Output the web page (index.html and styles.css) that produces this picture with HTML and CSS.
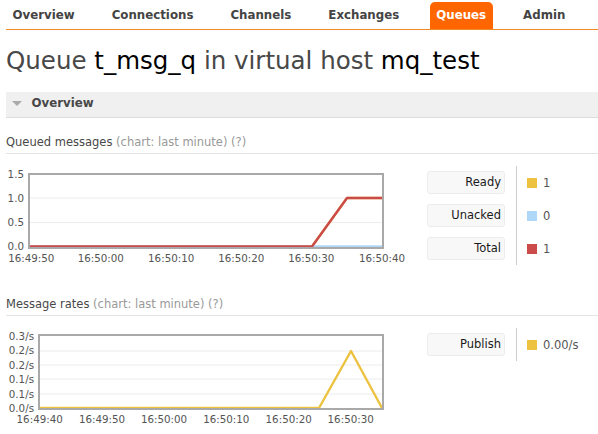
FILE: index.html
```html
<!DOCTYPE html>
<html>
<head>
<meta charset="utf-8">
<title>Queue t_msg_q</title>
<link rel="stylesheet" href="styles.css">
</head>
<body>
<div class="menu">
  <ul>
    <li><a>Overview</a></li>
    <li><a>Connections</a></li>
    <li><a>Channels</a></li>
    <li><a>Exchanges</a></li>
    <li class="active"><a>Queues</a></li>
    <li><a>Admin</a></li>
  </ul>
</div>
<div class="main">
  <h1>Queue <b>t_msg_q</b> in virtual host <b>mq_test</b></h1>
  <div class="section">
    <h2><span class="tri"></span>Overview</h2>
    <h3>Queued messages <span class="help">(chart: last minute) (?)</span></h3>
    <div class="chart-row">
      <svg class="chart" width="404" height="104" viewBox="0 0 404 104">
        <line class="grid" x1="24" y1="35" x2="376" y2="35"/>
        <line class="grid" x1="24" y1="59.5" x2="376" y2="59.5"/>
        <polyline class="s-ready" points="24,83.5 306,83.5 341,35 376,35"/>
        <polyline class="s-unacked" points="24,83.5 376,83.5"/>
        <polyline class="s-total" points="24,83.5 306,83.5 341,35 376,35"/>
        <rect class="frame" x="23" y="11" width="354" height="74"/>
        <g class="ylab">
          <text x="18" y="15">1.5</text>
          <text x="18" y="39">1.0</text>
          <text x="18" y="63">0.5</text>
          <text x="18" y="87">0.0</text>
        </g>
        <g class="xlab">
          <text x="25.3" y="99">16:49:50</text>
          <text x="94.8" y="99">16:50:00</text>
          <text x="165.2" y="99">16:50:10</text>
          <text x="235.3" y="99">16:50:20</text>
          <text x="305.3" y="99">16:50:30</text>
          <text x="376" y="99">16:50:40</text>
        </g>
      </svg>
      <div class="legend">
        <div class="keys">
          <div class="key">Ready</div>
          <div class="key">Unacked</div>
          <div class="key">Total</div>
        </div>
        <div class="vals">
          <div class="val"><span class="sw ready"></span>1</div>
          <div class="val"><span class="sw unacked"></span>0</div>
          <div class="val"><span class="sw total"></span>1</div>
        </div>
      </div>
    </div>

    <h3>Message rates <span class="help">(chart: last minute) (?)</span></h3>
    <div class="chart-row last">
      <svg class="chart" width="404" height="104" viewBox="0 0 404 104">
        <line class="grid" x1="34" y1="26" x2="376" y2="26"/>
        <line class="grid" x1="34" y1="40" x2="376" y2="40"/>
        <line class="grid" x1="34" y1="54" x2="376" y2="54"/>
        <line class="grid" x1="34" y1="69" x2="376" y2="69"/>
        <polyline class="s-ready" points="34,83 313,83 345,26 376,83"/>
        <rect class="frame" x="33" y="10" width="344" height="74"/>
        <g class="ylab">
          <text x="28" y="15">0.3/s</text>
          <text x="28" y="29.4">0.2/s</text>
          <text x="28" y="43.8">0.2/s</text>
          <text x="28" y="58.2">0.1/s</text>
          <text x="28" y="72.6">0.1/s</text>
          <text x="28" y="87">0.0/s</text>
        </g>
        <g class="xlab">
          <text x="33.7" y="98">16:49:40</text>
          <text x="96" y="98">16:49:50</text>
          <text x="158" y="98">16:50:00</text>
          <text x="220.3" y="98">16:50:10</text>
          <text x="282.7" y="98">16:50:20</text>
          <text x="344.7" y="98">16:50:30</text>
        </g>
      </svg>
      <div class="legend">
        <div class="keys">
          <div class="key">Publish</div>
        </div>
        <div class="vals">
          <div class="val"><span class="sw ready"></span>0.00/s</div>
        </div>
      </div>
    </div>
  </div>
</div>
</body>
</html>
```

FILE: styles.css
```css
html, body {
  margin: 0;
  padding: 0;
  background: #fff;
}
body {
  font-family: "DejaVu Sans", Verdana, sans-serif;
  color: #484848;
  overflow: hidden;
}

/* top menu */
.menu ul {
  list-style: none;
  margin: 0 0 0 6px;
  padding: 2px 0 0 0;
  display: flex;
  gap: 24px;
  border-bottom: 1px solid #f08c28;
}
.menu li a {
  display: block;
  height: 27px;
  line-height: 27px;
  padding: 0 6.5px;
  font-size: 11.8px;
  font-weight: bold;
  color: #444;
  border-radius: 5px 5px 0 0;
}
.menu li.active a {
  background: #ff6600;
  color: #fff;
}

/* main */
.main {
  padding-left: 6px;
}
h1 {
  margin: 16px 0 16px 0;
  font-size: 24.5px;
  line-height: 30px;
  font-weight: normal;
  color: #484848;
}
h1 b {
  font-weight: normal;
  color: #000;
}

.section h2 {
  margin: 0;
  height: 23px;
  padding-bottom: 2px;
  line-height: 23px;
  background: #f0f0f0;
  border-bottom: 1px solid #dcdcdc;
  font-size: 11.8px;
  font-weight: bold;
  color: #484848;
}
.tri {
  display: inline-block;
  width: 0;
  height: 0;
  border-left: 5px solid transparent;
  border-right: 5px solid transparent;
  border-top: 5px solid #aaa;
  margin: 0 9.5px 0 6px;
  vertical-align: 1px;
}

.section h3 {
  margin: 16px 0 9px 0;
  padding-bottom: 3px;
  line-height: 16px;
  font-size: 11.5px;
  font-weight: normal;
  color: #484848;
  border-bottom: 1px solid #e4e4e4;
}
.help {
  color: #999;
}

.chart-row {
  display: flex;
  align-items: flex-start;
  margin-bottom: 29px;
}
.chart-row.last {
  margin-bottom: 0;
}
.chart {
  display: block;
  margin-right: 17px;
  flex: none;
}
.grid {
  stroke: #ececec;
  stroke-width: 1;
}
.frame {
  fill: none;
  stroke: #a9a9a9;
  stroke-width: 2;
}
.s-ready, .s-unacked, .s-total {
  fill: none;
  stroke-width: 2.4;
  stroke-linejoin: round;
}
.s-ready { stroke: #edc240; }
.s-unacked { stroke: #afd8f8; }
.s-total { stroke: #cb4b4b; }
.ylab text, .xlab text {
  font-family: "DejaVu Sans", Verdana, sans-serif;
  font-size: 10.3px;
  fill: #545454;
}
.ylab text { text-anchor: end; }
.xlab text { text-anchor: middle; }

/* legend */
.legend {
  display: flex;
  margin-top: 3px;
}
.keys {
  padding: 5px 0;
}
.key {
  box-sizing: border-box;
  width: 78px;
  height: 23px;
  margin-bottom: 10px;
  padding-right: 3px;
  background: #f8f8f8;
  border: 1px solid #ececec;
  border-radius: 3px;
  text-align: right;
  line-height: 21px;
  font-size: 11.5px;
  color: #1a1a1a;
}
.key:last-child, .val:last-child {
  margin-bottom: 0;
}
.vals {
  margin-left: 11px;
  border-left: 1px solid #ccc;
  padding: 5px 0 5px 10px;
}
.val {
  height: 23px;
  margin-bottom: 10px;
  display: flex;
  align-items: center;
  font-size: 11.5px;
  color: #555;
}
.sw {
  display: inline-block;
  width: 10px;
  height: 10px;
  margin-right: 6px;
}
.sw.ready { background: #edc240; }
.sw.unacked { background: #afd8f8; }
.sw.total { background: #cb4b4b; }
```
